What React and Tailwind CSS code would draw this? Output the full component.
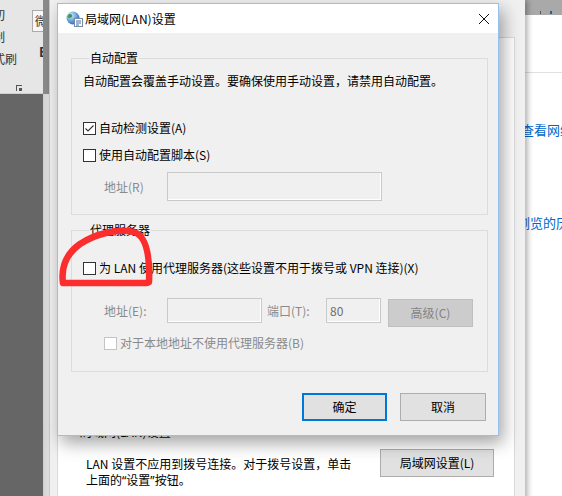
import React from "react";

function Check({ checked, disabled }) {
  return (
    <span
      className={`flex h-[13px] w-[13px] shrink-0 items-center justify-center border bg-white ${
        disabled ? "border-[#c4c4c4]" : "border-[#333333]"
      }`}
    >
      {checked && (
        <svg width="11" height="11" viewBox="0 0 11 11">
          <path d="M1.5 5.5 L4 8 L9.5 2.5" fill="none" stroke="#333" strokeWidth="1.1" />
        </svg>
      )}
    </span>
  );
}

function Globe() {
  return (
    <svg width="17" height="16" viewBox="0 0 17 16">
      <defs>
        <radialGradient id="gl" cx="35%" cy="30%" r="75%">
          <stop offset="0" stopColor="#cfeaff" />
          <stop offset="1" stopColor="#1d6cc2" />
        </radialGradient>
      </defs>
      <circle cx="7" cy="7" r="6.5" fill="url(#gl)" />
      <path d="M2.5 3.5 C4.5 2, 7 3.5, 6 5.5 C5 7.5, 3 7, 1.5 6 Z" fill="#3c9c44" />
      <path d="M7.5 8.5 C9.5 7.5, 11.5 9, 10.5 11 C9.5 12.5, 7.5 11.5, 7.5 8.5 Z" fill="#3c9c44" />
      <rect x="8.5" y="7.5" width="8" height="8" fill="#fff" stroke="#7c8aa0" />
      <path d="M10 10h5 M10 12h5 M10 14h3" stroke="#3b6fb0" />
    </svg>
  );
}

function Btn({ children, primary, className = "" }) {
  return (
    <div
      className={`flex h-[28px] items-center justify-center bg-[#e1e1e1] leading-4 ${
        primary ? "border-2 border-[#0078d7]" : "border border-[#adadad]"
      } ${className}`}
    >
      {children}
    </div>
  );
}

export default function App() {
  return (
    <div className="relative h-[496px] w-[562px] overflow-hidden bg-white font-['Noto_Sans_CJK_SC','Noto_Sans',sans-serif] text-[12px] text-black">
      {/* window far right, behind */}
      <div className="absolute left-[440px] top-0 flex h-full w-[122px] flex-col bg-white">
        <div className="flex h-[15px] items-end gap-[9px] bg-[#a9a9a9] pb-[1px] pl-[100px]">
          <span className="h-[3px] w-[1px] bg-[#555]" />
          <span className="h-[3px] w-[2px] bg-[#2d5aa0]" />
        </div>
        <div className="mt-[57px] border-t border-[#e0e0e0]" />
        <div className="mt-[49px] whitespace-nowrap pl-[81px] text-[13px] leading-[16px] text-[#0066cc]">查看网络</div>
        <div className="mt-[77px] whitespace-nowrap pl-[77px] text-[13px] leading-[16px] text-[#0066cc]">浏览的历</div>
      </div>

      {/* word window on the left */}
      <div className="absolute left-0 top-0 flex h-full w-[49px]">
        <div className="flex w-[43px] flex-col">
          <div className="flex h-[94px] overflow-hidden border-b border-[#cfcfcf] bg-[#e6e6e6]">
            <div className="flex w-[30px] flex-col pt-[7px]">
              {["剪切", "复制", "格式刷"].map((t) => (
                <div key={t} className="-ml-[19px] h-[22px] whitespace-nowrap leading-[16px] text-[#333]">
                  {t}
                </div>
              ))}
              <div className="ml-[16px] mt-[12px] flex h-[6px] w-[6px] items-end justify-end border-l border-t border-[#555]">
                <span className="h-[3px] w-[3px] bg-[#555]" />
              </div>
            </div>
            <div className="flex flex-1 flex-col overflow-hidden">
              <div className="-ml-[3px] h-[10px] w-[1px] bg-[#b5b5b5]" />
              <div className="ml-[2px] flex h-[22px] w-[20px] items-center border border-[#ababab] bg-[#f7f7f7] pl-[2px] leading-4 text-[#333]">
                微
              </div>
              <div className="ml-[9px] mt-[12px] text-[13px] font-bold leading-4 text-[#333]">B</div>
            </div>
          </div>
          <div className="flex-1 bg-[#666666]" />
        </div>
        <div className="flex w-[6px] flex-col">
          <div className="h-[94px] bg-[#8a8a8a]" />
          <div className="flex-1 bg-gradient-to-r from-[#cfcfcf] to-[#e4e4e4]" />
        </div>
      </div>

      {/* Internet properties dialog behind */}
      <div className="absolute left-[49px] top-0 flex h-[520px] w-[476px] flex-col border-l border-[#c9c9c9] bg-[#f0f0f0] shadow-[3px_0_5px_rgba(0,0,0,0.28)]">
        <div className="ml-[7px] mt-[37px] flex h-[470px] w-[458px] flex-col border border-[#d9d9d9] bg-white">
          <div className="ml-[22px] mt-[386px] leading-4">局域网(LAN)设置</div>
          <div className="mt-[9px] flex pl-[28px] pr-[20px]">
            <div className="pt-[7px] leading-4">
              <div>LAN 设置不应用到拨号连接。对于拨号设置，单击</div>
              <div>
                上面的<span className="font-['Noto_Sans',sans-serif]">“</span>设置
                <span className="font-['Noto_Sans',sans-serif]">”</span>按钮。
              </div>
            </div>
            <Btn className="ml-auto w-[114px]">局域网设置(L)</Btn>
          </div>
        </div>
      </div>

      {/* LAN settings dialog */}
      <div className="absolute left-[57px] top-[3px] flex h-[433px] w-[442px] flex-col border border-[#98c0ea] bg-[#f0f0f0] shadow-[4px_7px_16px_rgba(0,0,0,0.36)]">
        <div className="flex h-[29px] items-center bg-white pl-[8px] pr-[9px]">
          <Globe />
          <span className="ml-[2px] leading-4">局域网(LAN)设置</span>
          <svg className="ml-auto" width="10" height="10" viewBox="0 0 10 10">
            <path d="M0 0 L10 10 M10 0 L0 10" stroke="#111" strokeWidth="1" />
          </svg>
        </div>

        <fieldset className="ml-[13px] mr-[10px] mt-[17px] border border-[#dcdcdc] pb-[13px] pl-[11px]">
          <legend className="ml-[6px] px-[1px] leading-4">自动配置</legend>
          <div className="mt-[7px] h-[16px] leading-4">自动配置会覆盖手动设置。要确保使用手动设置，请禁用自动配置。</div>
          <div className="mt-[31px] flex h-[16px] items-center gap-[3px] leading-4">
            <Check checked />
            自动检测设置(A)
          </div>
          <div className="mt-[11px] flex h-[16px] items-center gap-[3px] leading-4">
            <Check />
            使用自动配置脚本(S)
          </div>
          <div className="ml-[21px] mt-[9px] flex items-center">
            <span className="w-[63px] leading-4 text-[#8a8a8a]">地址(R)</span>
            <div className="h-[29px] w-[215px] border border-[#c9c9c9] bg-[#f0f0f0] shadow-[inset_-1px_-1px_0_#fff]" />
          </div>
        </fieldset>

        <fieldset className="ml-[13px] mr-[10px] mt-[7px] border border-[#dcdcdc] pb-[20px] pl-[11px]">
          <legend className="ml-[6px] px-[1px] leading-4">代理服务器</legend>
          <div className="mt-[22px] flex h-[16px] items-center gap-[3px] leading-4">
            <Check />
            为 LAN 使用代理服务器(这些设置不用于拨号或 VPN 连接)(X)
          </div>
          <div className="ml-[21px] mt-[22px] flex items-start text-[#8a8a8a]">
            <span className="flex h-[25px] w-[63px] items-center leading-4">地址(E):</span>
            <div className="h-[25px] w-[95px] border border-[#c9c9c9] bg-[#f0f0f0] shadow-[inset_-1px_-1px_0_#fff]" />
            <span className="ml-[5px] flex h-[25px] w-[59px] items-center leading-4">端口(T):</span>
            <div className="flex h-[25px] w-[55px] items-center border border-[#c9c9c9] bg-[#f0f0f0] pl-[3px] leading-4 text-[#6d6d6d] shadow-[inset_-1px_-1px_0_#fff]">
              80
            </div>
            <div className="ml-[7px] mt-[1px] flex h-[28px] w-[85px] items-center justify-center border border-[#bfbfbf] bg-[#cccccc] leading-4 text-[#838383]">
              高级(C)
            </div>
          </div>
          <div className="ml-[21px] mt-[8px] flex h-[16px] items-center gap-[3px] leading-4 text-[#8a8a8a]">
            <Check disabled />
            对于本地地址不使用代理服务器(B)
          </div>
        </fieldset>

        <div className="mt-[21px] flex justify-end gap-[13px] pr-[12px]">
          <Btn primary className="w-[85px]">确定</Btn>
          <Btn className="w-[86px]">取消</Btn>
        </div>
      </div>

      {/* red hand-drawn circle */}
      <svg className="pointer-events-none absolute left-0 top-0" width="562" height="496" viewBox="0 0 562 496">
        <path
          d="M147 283 L63 283 C61 268, 66 254, 80 244 C95 234, 118 228, 134 232 C146 236, 150 256, 149 282"
          fill="none"
          stroke="#fb2d2d"
          strokeWidth="6.5"
          strokeLinecap="round"
          strokeLinejoin="round"
        />
      </svg>
    </div>
  );
}
